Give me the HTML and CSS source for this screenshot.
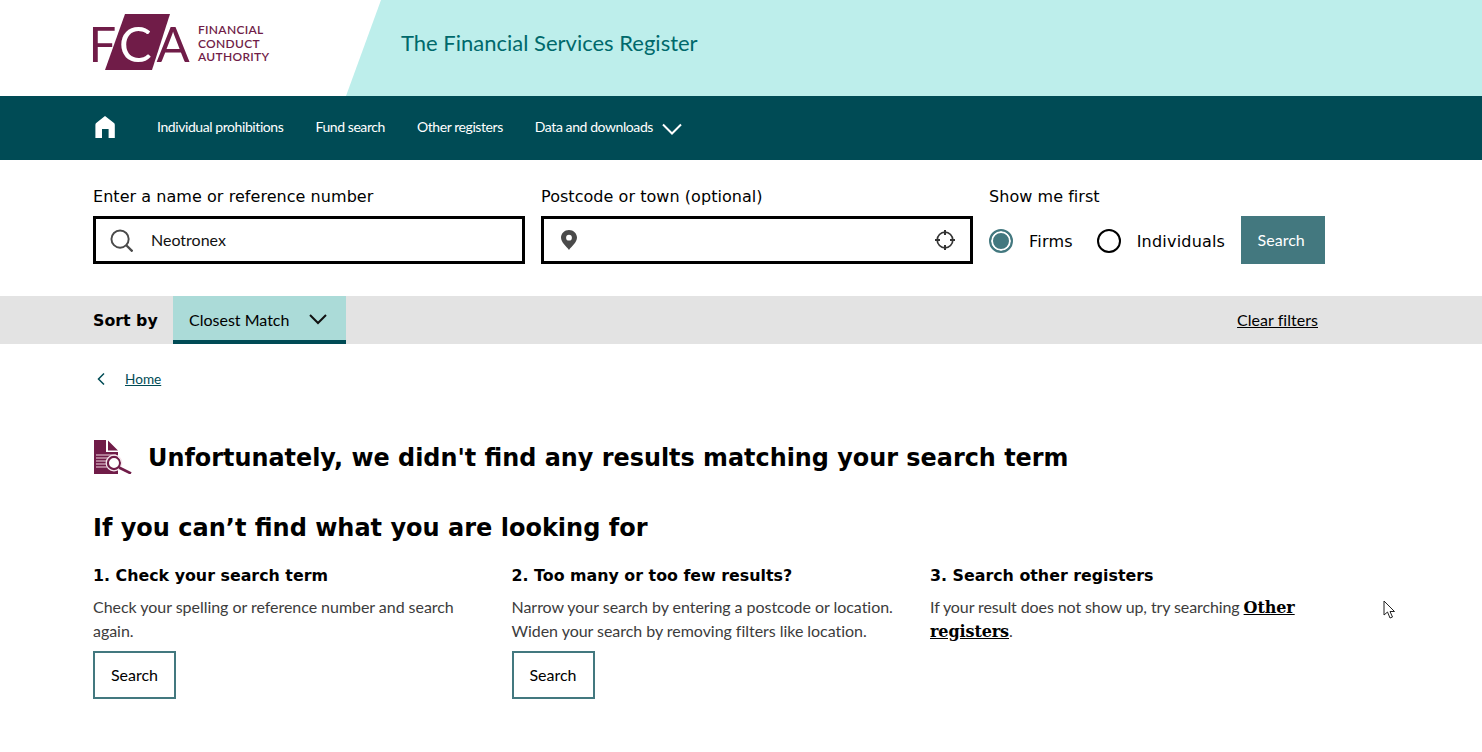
FILE: index.html
```html
<!DOCTYPE HTML>
<html lang="en-US">
<head>
<meta charset="UTF-8">
<title>The Financial Services Register</title>
<link rel="stylesheet" href="styles.css">
</head>
<body>
<header class="top">
	<div class="brand">
		<svg class="logo" width="100" height="60" viewBox="0 0 100 60">
			<defs>
				<linearGradient id="logoLeft" gradientUnits="userSpaceOnUse" x1="12" y1="56" x2="68" y2="76">
					<stop offset="0" stop-color="#701c48"/><stop offset="0" stop-color="#fff"/>
				</linearGradient>
				<linearGradient id="logoRight" gradientUnits="userSpaceOnUse" x1="59" y1="56" x2="115" y2="74">
					<stop offset="0" stop-color="#fff"/><stop offset="0" stop-color="#701c48"/>
				</linearGradient>
			</defs>
			<polygon class="logo-shape" points="32,0 77,0 59,56 12,56"/>
			<text class="logo-f" x="-4.5" y="47.5">F</text>
			<text class="logo-c" x="26" y="47.5">C</text>
			<text class="logo-a" x="63.5" y="47.5">A</text>
		</svg>
		<div class="brand-name">FINANCIAL<br>CONDUCT<br>AUTHORITY</div>
	</div>
	<div class="top-title">The Financial Services Register</div>
</header>

<nav class="nav">
	<a class="nav-home" href="#">
		<svg width="22" height="22" viewBox="0 0 22 22"><path fill="#fff" d="M11 0 L20 7 Q20.8 7.7 20.8 9 V22 H14.6 V13 H8 V22 H1.4 V9 Q1.4 7.7 2.2 7 Z"/></svg>
	</a>
	<a href="#">Individual prohibitions</a>
	<a href="#">Fund search</a>
	<a href="#">Other registers</a>
	<a href="#">Data and downloads
		<svg class="nav-chev" width="20" height="12" viewBox="0 0 20 12"><path fill="none" stroke="#fff" stroke-width="2" d="M1 1.5 L10 10.5 L19 1.5"/></svg>
	</a>
</nav>

<form class="search">
	<div class="field">
		<label>Enter a name or reference number</label>
		<div class="box">
			<svg width="23" height="23" viewBox="0 0 24 24"><circle cx="10.5" cy="10.5" r="9" fill="none" stroke="#4a4a4a" stroke-width="2"/><path stroke="#4a4a4a" stroke-width="2.4" d="M17 17 L23.5 23.5"/></svg>
			<span class="box-text">Neotronex</span>
		</div>
	</div>
	<div class="field">
		<label>Postcode or town (optional)</label>
		<div class="box">
			<svg class="pin" width="16" height="20" viewBox="0 0 16 20"><path fill="#4a4a4a" fill-rule="evenodd" d="M8 0 C3.6 0 0 3.4 0 7.6 C0 12.5 5.5 16.5 8 20 C10.5 16.5 16 12.5 16 7.6 C16 3.4 12.4 0 8 0 Z M8 4.8 A2.9 2.9 0 1 1 8 10.6 A2.9 2.9 0 1 1 8 4.8 Z"/></svg>
			<svg class="locate" width="20" height="20" viewBox="0 0 20 20"><circle cx="10" cy="10" r="7.8" fill="none" stroke="#333" stroke-width="1.7"/><path stroke="#333" stroke-width="2" d="M10 0 V5 M10 15 V20 M0 10 H5 M15 10 H20"/></svg>
		</div>
	</div>
	<div class="field">
		<label>Show me first</label>
		<div class="radios">
			<span class="radio radio-on"></span><span class="radio-text">Firms</span>
			<span class="radio"></span><span class="radio-text">Individuals</span>
			<button class="btn-search" type="button">Search</button>
		</div>
	</div>
</form>

<div class="sortbar">
	<span class="sort-label">Sort by</span>
	<div class="sort-select">Closest Match
		<svg width="18" height="11" viewBox="0 0 18 11"><path fill="none" stroke="#111" stroke-width="2" d="M1 1 L9 9 L17 1"/></svg>
	</div>
	<a class="clear" href="#">Clear filters</a>
</div>

<main class="main">
	<div class="crumb">
		<svg width="8" height="12" viewBox="0 0 8 12"><path fill="none" stroke="#004b55" stroke-width="1.5" d="M7 0.5 L1.5 6 L7 11.5"/></svg>
		<a href="#">Home</a>
	</div>
	<div class="nores">
		<svg width="38" height="34" viewBox="0 0 38 34">
			<path fill="#701c48" d="M0 0 H12 V12 H24 V34 H0 Z M14 0.5 L24 10.5 H14 Z"/>
			<path stroke="#f0d5e0" stroke-width="1.2" d="M2 15 H22 M2 18 H14 M2 21 H12 M2 24 H12 M2 27 H13"/>
			<circle cx="20" cy="23" r="6" fill="#fff" stroke="#701c48" stroke-width="2"/>
			<circle cx="20" cy="23" r="7.8" fill="none" stroke="#f6e6ed" stroke-width="1.2"/>
			<path stroke="#701c48" stroke-width="2.6" d="M25 27.5 L37 33.5"/>
		</svg>
		<h1>Unfortunately, we didn't find any results matching your search term</h1>
	</div>
	<h2>If you can’t find what you are looking for</h2>
	<div class="tips">
		<div class="tip">
			<h3>1. Check your search term</h3>
			<p>Check your spelling or reference number and search again.</p>
			<a class="btn-line" href="#">Search</a>
		</div>
		<div class="tip">
			<h3>2. Too many or too few results?</h3>
			<p>Narrow your search by entering a postcode or location. Widen your search by removing filters like location.</p>
			<a class="btn-line" href="#">Search</a>
		</div>
		<div class="tip">
			<h3>3. Search other registers</h3>
			<p>If your result does not show up, try searching <a class="strong-link" href="#">Other registers</a>.</p>
		</div>
	</div>
</main>

<svg class="cursor" width="13" height="20" viewBox="0 0 13 20"><path fill="#fff" stroke="#222" stroke-width="1" d="M1 1 V15 L4.5 12 L7 18 L9.5 17 L7 11.5 H11.5 Z"/></svg>
</body>
</html>
```

FILE: styles.css
```css
html, body, div, h1, h2, h3, p, form, label { margin:0; padding:0; }
body { position:relative; height:752px; overflow:hidden; font:14px Lato,sans-serif; color:#000; background:#fff; }
a { color:inherit; }

.top { display:flex; height:96px; }
.brand { display:flex; width:253px; padding:14px 0 0 93px; }
.logo { display:block; flex:none; overflow:visible; }
.logo text { font:400 49px Lato,sans-serif; }
.logo-shape { fill:#701c48; }
.logo-f { fill:url(#logoLeft); }
.logo-c { fill:#fff; }
.logo-a { fill:url(#logoRight); }
.brand-name { margin:9px 0 0 5px; font:600 12px/13.5px Lato,sans-serif; letter-spacing:.3px; color:#701c48; }
.top-title { flex:1; padding-left:55px; font-size:22px; line-height:86px; color:#00696b; background:#bdeeeb; clip-path:polygon(35px 0, 100% 0, 100% 100%, 0 100%); }

.nav { display:flex; align-items:center; height:64px; padding:0 0 3px 94px; box-sizing:border-box; background:#004b55; }
.nav a { margin-right:32px; font-size:14px; letter-spacing:-.42px; color:#fff; text-decoration:none; }
.nav-home { display:block; width:32px; height:22px; margin-right:31px !important; }
.nav-chev { margin-left:6px; vertical-align:-3px; }

.search { display:flex; gap:16px; height:136px; padding:26px 0 0 93px; box-sizing:border-box; }
.field label { display:block; height:30px; padding-top:1px; box-sizing:border-box; font:16px/20px "DejaVu Sans",sans-serif; letter-spacing:.05px; }
.box { display:flex; align-items:center; width:432px; height:48px; padding:0 14px; box-sizing:border-box; border:3px solid #000; }
.box svg { flex:none; }
.box-text { margin-left:18px; padding-bottom:2px; font-size:16px; color:#111; }
.pin { margin-left:3px; }
.locate { margin-left:auto; margin-right:1px; }
.radios { display:flex; align-items:center; height:48px; }
.radio { display:block; width:24px; height:24px; margin-top:2px; box-sizing:border-box; border:2px solid #000; border-radius:50%; }
.radio-on { border-color:#43787f; background:#43787f; box-shadow:inset 0 0 0 2px #fff; }
.radio-text { margin:2px 24px 0 16px; font:16px "DejaVu Sans",sans-serif; letter-spacing:.2px; }
.radio-text:last-of-type { margin-right:16px; }
.btn-search { width:84px; height:48px; padding:0 4px 2px 0; border:0; font:16px Lato,sans-serif; color:#fff; background:#43787f; }

.sortbar { display:flex; align-items:center; height:48px; padding:0 164px 0 93px; background:#e3e3e3; }
.sort-label { width:80px; font:bold 15.8px "DejaVu Sans",sans-serif; }
.sort-select { display:flex; align-items:center; justify-content:space-between; width:173px; height:48px; padding:2px 19px 0 16px; box-sizing:border-box; font-size:16px; background:#abdbd8; border-bottom:4px solid #004b55; }
.sort-select svg { margin-top:1px; }
.clear { margin:0 0 2px auto; font-size:16px; letter-spacing:.03px; }

.main { padding-left:93px; }
.crumb { display:flex; align-items:center; height:14px; margin-top:28px; }
.crumb svg { margin:0 20px 0 4px; }
.crumb a { font-size:13.6px; color:#004b55; }
.nores { display:flex; align-items:center; gap:16px; height:34px; margin:54px 0 0 1px; }
h1 { padding-top:2px; font:bold 23.9px "DejaVu Sans",sans-serif; }
h2 { margin-top:39px; font:bold 24px/30px "DejaVu Sans",sans-serif; }
.tips { display:flex; margin-top:21px; }
.tip { width:388px; margin-right:30.5px; }
h3 { font:bold 15.85px/24px "DejaVu Sans",sans-serif; }
.tip p { margin:7px 0 8px; font-size:16px; line-height:24px; letter-spacing:-.04px; color:#3c3c3c; }
.tip:last-child p { letter-spacing:-.1px; }
.strong-link { font:bold 16px/20px "DejaVu Serif",serif; color:#000; }
.btn-line { display:inline-block; width:83px; height:48px; box-sizing:border-box; border:2px solid #43787f; font-size:16px; line-height:44px; text-align:center; text-decoration:none; color:#000; }

.cursor { position:absolute; left:1383px; top:600px; }
```
